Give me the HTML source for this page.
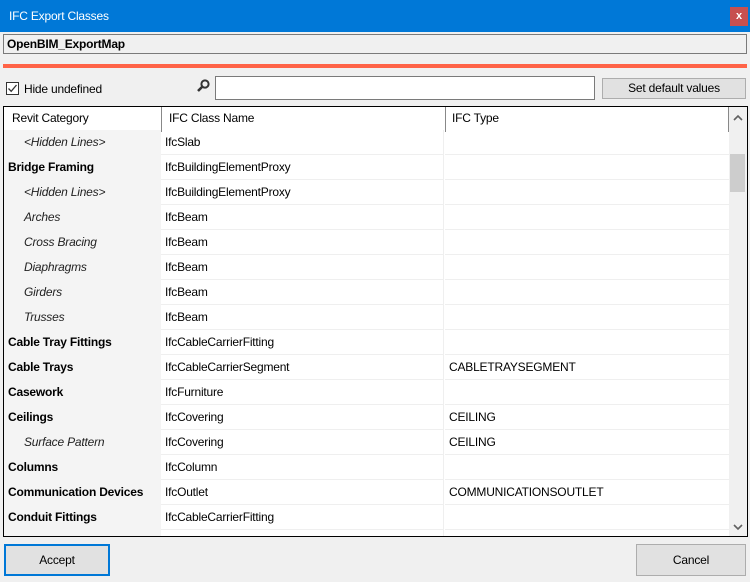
<!DOCTYPE html>
<html><head><style>
*{margin:0;padding:0;box-sizing:border-box}
body{width:750px;height:582px;background:#f0f0f0;font-family:"Liberation Sans",sans-serif;font-size:12px;color:#000;position:relative;overflow:hidden;letter-spacing:-0.2px}
.a{position:absolute}
.title{left:0;top:0;width:750px;height:32px;background:#0078d7;color:#fff;font-size:12px;line-height:32px;padding-left:9px}
.close{left:730px;top:7px;width:18px;height:19px;background:#c75050;color:#fff;font-weight:bold;font-size:11px;text-align:center;line-height:19px}
.name{left:3px;top:34px;width:744px;height:20px;border:1px solid #7a7a7a;background:#f0f0f0;font-weight:bold;line-height:18px;padding-left:3px}
.orange{left:3px;top:64px;width:744px;height:4px;background:#ff6347}
.chk{left:6px;top:82px;width:13px;height:13px;border:1px solid #333;background:#fff}
.search{left:215px;top:76px;width:380px;height:24px;border:1px solid #7a7a7a;background:#fff}
.btn{border:1px solid #adadad;background:#e1e1e1;text-align:center}
.tbl{left:3px;top:106px;width:745px;height:431px;border:1px solid #000;background:#fff;overflow:hidden}
.row{position:absolute;left:0;height:25px;width:725px}
.c{position:absolute;top:0;height:25px;line-height:24px;padding-left:4px;white-space:nowrap}
.c1{left:0;width:157px;background:#f4f4f4}
.c2{left:157px;width:283px;border-bottom:1px solid #efefef;border-right:1px solid #efefef}
.c3{left:441px;width:284px;border-bottom:1px solid #efefef}
.b{font-weight:bold}
.i{font-style:italic;padding-left:20px;color:#222}
</style></head><body>
<div class="a title">IFC Export Classes</div>
<div class="a close">x</div>
<div class="a name">OpenBIM_ExportMap</div>
<div class="a orange"></div>
<div class="a chk"><svg width="11" height="11" viewBox="0 0 11 11"><path d="M1.5 5.5 L4.2 8.3 L9.5 2" fill="none" stroke="#333" stroke-width="1.3"/></svg></div>
<div class="a" style="left:24px;top:82px;line-height:14px">Hide undefined</div>
<svg class="a" style="left:196px;top:79px" width="14" height="14" viewBox="0 0 14 14"><circle cx="9" cy="5" r="3.6" fill="none" stroke="#333" stroke-width="2"/><path d="M6.5 7.5 L2 12" stroke="#333" stroke-width="2.6"/></svg>
<div class="a search"></div>
<div class="a btn" style="left:602px;top:78px;width:144px;height:21px;line-height:19px">Set default values</div>
<div class="a tbl">
 <div class="a" style="left:0;top:0;width:725px;height:22px;background:#fff">
  <div class="c" style="left:0;width:157px;line-height:22px;padding-left:8px">Revit Category</div>
  <div class="c" style="left:157px;width:284px;line-height:22px;padding-left:7px;border-left:1px solid #888">IFC Class Name</div>
  <div class="c" style="left:441px;width:284px;line-height:22px;padding-left:6px;border-left:1px solid #888;border-right:1px solid #888">IFC Type</div>
 </div>
 <div class="a" style="left:0;top:23px;width:725px;height:410px">
  <div class="row" style="top:0"><div class="c c1 i">&lt;Hidden Lines&gt;</div><div class="c c2">IfcSlab</div><div class="c c3"></div></div>
  <div class="row" style="top:25px"><div class="c c1 b">Bridge Framing</div><div class="c c2">IfcBuildingElementProxy</div><div class="c c3"></div></div>
  <div class="row" style="top:50px"><div class="c c1 i">&lt;Hidden Lines&gt;</div><div class="c c2">IfcBuildingElementProxy</div><div class="c c3"></div></div>
  <div class="row" style="top:75px"><div class="c c1 i">Arches</div><div class="c c2">IfcBeam</div><div class="c c3"></div></div>
  <div class="row" style="top:100px"><div class="c c1 i">Cross Bracing</div><div class="c c2">IfcBeam</div><div class="c c3"></div></div>
  <div class="row" style="top:125px"><div class="c c1 i">Diaphragms</div><div class="c c2">IfcBeam</div><div class="c c3"></div></div>
  <div class="row" style="top:150px"><div class="c c1 i">Girders</div><div class="c c2">IfcBeam</div><div class="c c3"></div></div>
  <div class="row" style="top:175px"><div class="c c1 i">Trusses</div><div class="c c2">IfcBeam</div><div class="c c3"></div></div>
  <div class="row" style="top:200px"><div class="c c1 b">Cable Tray Fittings</div><div class="c c2">IfcCableCarrierFitting</div><div class="c c3"></div></div>
  <div class="row" style="top:225px"><div class="c c1 b">Cable Trays</div><div class="c c2">IfcCableCarrierSegment</div><div class="c c3">CABLETRAYSEGMENT</div></div>
  <div class="row" style="top:250px"><div class="c c1 b">Casework</div><div class="c c2">IfcFurniture</div><div class="c c3"></div></div>
  <div class="row" style="top:275px"><div class="c c1 b">Ceilings</div><div class="c c2">IfcCovering</div><div class="c c3">CEILING</div></div>
  <div class="row" style="top:300px"><div class="c c1 i">Surface Pattern</div><div class="c c2">IfcCovering</div><div class="c c3">CEILING</div></div>
  <div class="row" style="top:325px"><div class="c c1 b">Columns</div><div class="c c2">IfcColumn</div><div class="c c3"></div></div>
  <div class="row" style="top:350px"><div class="c c1 b">Communication Devices</div><div class="c c2">IfcOutlet</div><div class="c c3">COMMUNICATIONSOUTLET</div></div>
  <div class="row" style="top:375px"><div class="c c1 b">Conduit Fittings</div><div class="c c2">IfcCableCarrierFitting</div><div class="c c3"></div></div>
  <div class="row" style="top:400px"><div class="c c1"></div><div class="c c2"></div><div class="c c3"></div></div>
 </div>
 <div class="a" style="left:725px;top:0;width:18px;height:429px;background:#f0f0f0">
  <svg class="a" style="left:4px;top:7px" width="10" height="8" viewBox="0 0 10 8"><path d="M1 6 L5 2 L9 6" fill="none" stroke="#606060" stroke-width="1.6"/></svg>
  <div class="a" style="left:1px;top:47px;width:15px;height:38px;background:#cdcdcd"></div>
  <svg class="a" style="left:4px;top:416px" width="10" height="8" viewBox="0 0 10 8"><path d="M1 2 L5 6 L9 2" fill="none" stroke="#606060" stroke-width="1.6"/></svg>
 </div>
</div>
<div class="a btn" style="left:4px;top:544px;width:106px;height:32px;line-height:28px;border:2px solid #0078d7">Accept</div>
<div class="a btn" style="left:636px;top:544px;width:110px;height:32px;line-height:30px">Cancel</div>
</body></html>
